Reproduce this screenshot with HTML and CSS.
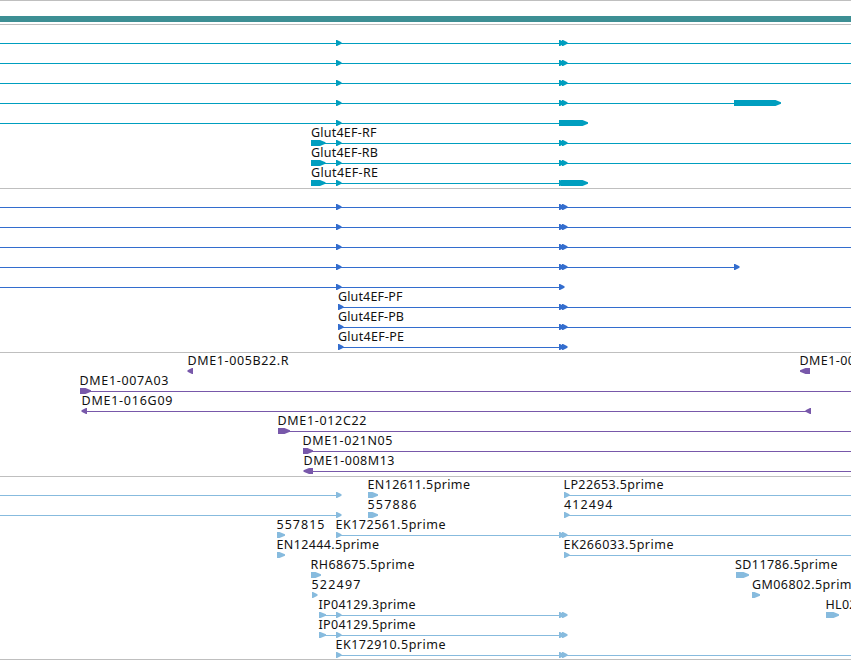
FILE: index.html
```html
<!DOCTYPE html>
<html lang="en">
<head>
<meta charset="utf-8">
<title>Genome region</title>
<link rel="stylesheet" href="styles.css">
</head>
<body>
<main class="browser">
  <section class="track contig"><div class="contig-bar"></div></section>
  <section class="track transcripts" id="transcripts"></section>
  <section class="track proteins" id="proteins"></section>
  <section class="track clones" id="clones"></section>
  <section class="track ests" id="ests"></section>
</main>
<script src="tracks.js"></script>
</body>
</html>
```
FILE: styles.css
```css
body {
  margin: 0;
  background: #fff;
}
.browser {
  display: flex;
  flex-direction: column;
  width: 851px;
  height: 659px;
  overflow: hidden;
  border-bottom: 1px solid #bfbfbf;
}
.track {
  display: flex;
  flex-direction: column;
  flex: none;
  border-top: 1px solid #bfbfbf;
  padding: 2px 0 1px;
}
.contig {
  padding: 15px 0 2px;
}
.contig-bar {
  height: 6px;
  background: #3d8f94;
}
.row {
  display: block;
  width: 851px;
  height: 20px;
  flex: none;
  overflow: visible;
}
.transcripts { color: #009ebf; }
.proteins { color: #336dce; }
.clones { color: #7858aa; }
.ests { color: #87bbde; padding-bottom: 0; }
.span, .exon { fill: currentColor; }
.span { shape-rendering: crispEdges; }
.label {
  fill: #111;
  font: 12.5px "Noto Sans", "DejaVu Sans", sans-serif;
}
```
FILE: tracks.js
```js
// Row fields: s = connecting spans [from, to], r / l = exons pointing right / left, t = labels [x, text, width]
const END = 851;
const pair = [[559, 564.5], [562, 567.5]];
const first = [336, 341.5];
const through = { s: [[0, END]], r: [first, ...pair] };
const gene = (name, width) => ({
  s: [[311, END]], r: [[311, 325.5], first, ...pair], t: [[311, name, width]]
});
const protein = (name, end, width) => ({
  s: [[338, end]], r: [[338, 343.5], ...pair], t: [[338, name, width]]
});

const tracks = {
  transcripts: [
    through, through, through,
    { s: [[0, 735]], r: [first, ...pair, [734, 781]] },
    { s: [[0, 560]], r: [first, [559, 588]] },
    gene("Glut4EF-RF", 65.5),
    gene("Glut4EF-RB", 67),
    { s: [[311, 560]], r: [[311, 325.5], first, [559, 564.5], [561, 588]], t: [[311, "Glut4EF-RE", 67]] }
  ],
  proteins: [
    through, through, through,
    { s: [[0, 735]], r: [first, ...pair, [734, 739.5]] },
    { s: [[0, 560]], r: [first, [559, 564.5]] },
    protein("Glut4EF-PF", END, 64.5),
    protein("Glut4EF-PB", END, 66),
    protein("Glut4EF-PE", 560, 66)
  ],
  clones: [
    { l: [[187.5, 193], [800, 810]], t: [[187.5, "DME1-005B22.R", 101], [799.5, "DME1-00", 55.5]] },
    { s: [[80, END]], r: [[80, 91]], t: [[79.5, "DME1-007A03", 89]] },
    { s: [[84, 810]], l: [[81.5, 87], [805.5, 811]], t: [[81.5, "DME1-016G09", 91]] },
    { s: [[278, END]], r: [[278, 290]], t: [[277.5, "DME1-012C22", 89]] },
    { s: [[303, END]], r: [[303, 313]], t: [[302.5, "DME1-021N05", 90]] },
    { s: [[308, END]], l: [[303.5, 313]], t: [[303.5, "DME1-008M13", 91]] }
  ],
  ests: [
    { s: [[0, 338], [564, END]], r: [first, [368, 378], [564, 569.5]], t: [[367.5, "EN12611.5prime", 102.5], [563.5, "LP22653.5prime", 100]] },
    { s: [[0, 338], [564, END]], r: [first, [368, 378], [564, 569.5]], t: [[367.5, "557886", 49], [564, "412494", 48.5]] },
    { s: [[336, END]], r: [[277, 285], first, ...pair], t: [[276.5, "557815", 48], [335.5, "EK172561.5prime", 110]] },
    { s: [[564, END]], r: [[277, 285], [564, 569.5]], t: [[276.5, "EN12444.5prime", 102.5], [563.5, "EK266033.5prime", 110]] },
    { r: [[311, 321], [736, 749]], t: [[310.5, "RH68675.5prime", 104], [735, "SD11786.5prime", 102.5]] },
    { r: [[312, 317.5], [752, 760]], t: [[311.5, "522497", 49], [752, "GM06802.5prime", 107]] },
    { s: [[319, 560]], r: [[319, 326], first, ...pair], t: [[318.5, "IP04129.3prime", 97]] },
    { s: [[319, 560]], r: [[319, 326], first, ...pair], t: [[318.5, "IP04129.5prime", 97]] },
    { s: [[336, END]], r: [first, ...pair], t: [[335.5, "EK172910.5prime", 110]] }
  ]
};
// The seventh EST row also holds a clone that runs past the right edge
tracks.ests[6].r.push([826, 839]);
tracks.ests[6].t.push([825.5, "HL02", 31]);

const right = ([a, b]) =>
  `<path class="exon" d="M${a} 13H${Math.max(a + 1, b - 5.5)}L${b} 15.2V16.8L${Math.max(a + 1, b - 5.5)} 19H${a}Z"/>`;
const left = ([a, b]) =>
  `<path class="exon" d="M${b} 13H${Math.min(b - 1, a + 5.5)}L${a} 15.2V16.8L${Math.min(b - 1, a + 5.5)} 19H${b}Z"/>`;
const span = ([a, b]) => `<rect class="span" x="${a}" y="16" width="${b - a}" height="1"/>`;
const label = ([x, text, width]) =>
  `<text class="label" x="${x}" y="10" textLength="${width}">${text}</text>`;

for (const [id, rows] of Object.entries(tracks)) {
  document.getElementById(id).innerHTML = rows.map(({ s = [], r = [], l = [], t = [] }) =>
    `<svg class="row" viewBox="0 0 851 20">${s.map(span).join("")}${r.map(right).join("")}${l.map(left).join("")}${t.map(label).join("")}</svg>`
  ).join("");
}
```
